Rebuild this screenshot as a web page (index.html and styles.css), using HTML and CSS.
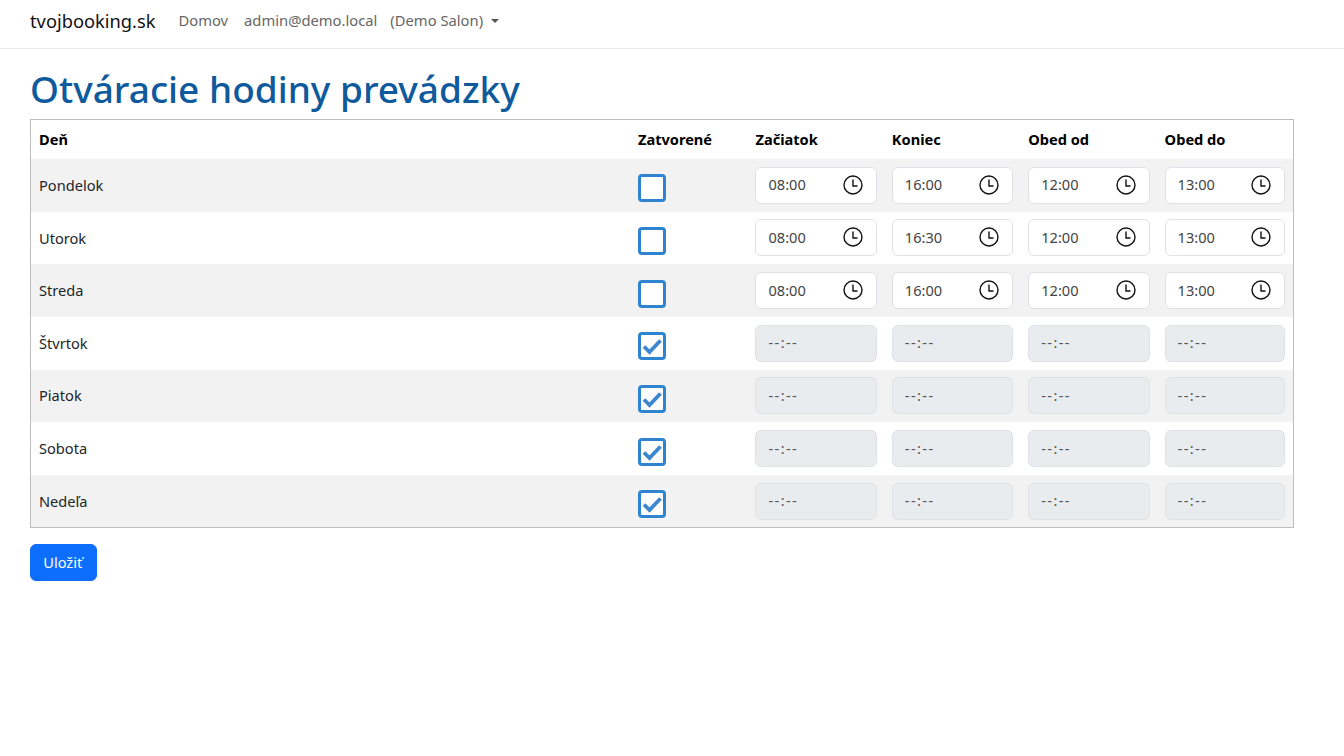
FILE: index.html
```html
<!DOCTYPE html>
<html lang="sk">
<head>
<meta charset="utf-8">
<title>Otváracie hodiny prevádzky</title>
<link rel="stylesheet" href="styles.css">
</head>
<body>
<svg class="defs" width="0" height="0" aria-hidden="true">
  <symbol id="clock" viewBox="0 0 20 20">
    <circle cx="10" cy="10" r="9" fill="none" stroke="#111" stroke-width="1.4"/>
    <path d="M10 4.5V11H14.5" fill="none" stroke="#111" stroke-width="1.4"/>
  </symbol>
  <symbol id="check" viewBox="0 0 24 24">
    <path d="M4 12.5L9.5 18L20.5 6.5" fill="none" stroke="#3d86d0" stroke-width="3.8"/>
  </symbol>
</svg>
<nav class="navbar">
  <a class="brand" href="#">tvojbooking.sk</a>
  <a class="nav-link" href="#">Domov</a>
  <a class="nav-link" href="#">admin@demo.local</a>
  <a class="nav-link dropdown" href="#">(Demo Salon)<span class="caret"></span></a>
</nav>
<main class="content">
  <h1 class="title">Otváracie hodiny prevádzky</h1>
  <table class="hours">
    <colgroup>
      <col class="c-day"><col class="c-closed"><col class="c-start"><col class="c-end"><col class="c-lfrom"><col class="c-lto">
    </colgroup>
    <thead>
      <tr><th>Deň</th><th>Zatvorené</th><th>Začiatok</th><th>Koniec</th><th>Obed od</th><th>Obed do</th></tr>
    </thead>
    <tbody>
      <tr><td>Pondelok</td><td><span class="box"></span></td>
        <td><div class="time">08:00<svg class="ic"><use href="#clock"/></svg></div></td>
        <td><div class="time">16:00<svg class="ic"><use href="#clock"/></svg></div></td>
        <td><div class="time">12:00<svg class="ic"><use href="#clock"/></svg></div></td>
        <td><div class="time">13:00<svg class="ic"><use href="#clock"/></svg></div></td></tr>
      <tr><td>Utorok</td><td><span class="box"></span></td>
        <td><div class="time">08:00<svg class="ic"><use href="#clock"/></svg></div></td>
        <td><div class="time">16:30<svg class="ic"><use href="#clock"/></svg></div></td>
        <td><div class="time">12:00<svg class="ic"><use href="#clock"/></svg></div></td>
        <td><div class="time">13:00<svg class="ic"><use href="#clock"/></svg></div></td></tr>
      <tr><td>Streda</td><td><span class="box"></span></td>
        <td><div class="time">08:00<svg class="ic"><use href="#clock"/></svg></div></td>
        <td><div class="time">16:00<svg class="ic"><use href="#clock"/></svg></div></td>
        <td><div class="time">12:00<svg class="ic"><use href="#clock"/></svg></div></td>
        <td><div class="time">13:00<svg class="ic"><use href="#clock"/></svg></div></td></tr>
      <tr><td>Štvrtok</td><td><span class="box"><svg class="tick"><use href="#check"/></svg></span></td>
        <td><div class="time off">--:--</div></td><td><div class="time off">--:--</div></td><td><div class="time off">--:--</div></td><td><div class="time off">--:--</div></td></tr>
      <tr><td>Piatok</td><td><span class="box"><svg class="tick"><use href="#check"/></svg></span></td>
        <td><div class="time off">--:--</div></td><td><div class="time off">--:--</div></td><td><div class="time off">--:--</div></td><td><div class="time off">--:--</div></td></tr>
      <tr><td>Sobota</td><td><span class="box"><svg class="tick"><use href="#check"/></svg></span></td>
        <td><div class="time off">--:--</div></td><td><div class="time off">--:--</div></td><td><div class="time off">--:--</div></td><td><div class="time off">--:--</div></td></tr>
      <tr><td>Nedeľa</td><td><span class="box"><svg class="tick"><use href="#check"/></svg></span></td>
        <td><div class="time off">--:--</div></td><td><div class="time off">--:--</div></td><td><div class="time off">--:--</div></td><td><div class="time off">--:--</div></td></tr>
    </tbody>
  </table>
  <button class="save" type="button">Uložiť</button>
</main>
</body>
</html>
```
FILE: styles.css
```css
* { box-sizing: border-box; }
html, body { margin: 0; padding: 0; }
body {
  background: #fff;
  color: #212529;
  font-family: "Noto Sans", "Open Sans", sans-serif;
  font-size: 15px;
  line-height: 1.5;
}
.defs { position: absolute; }
a { text-decoration: none; }
.navbar {
  display: flex;
  align-items: center;
  height: 49px;
  padding: 0 30px 7px;
  border-bottom: 1px solid #e6e8ec;
}
.brand { color: #111; font-size: 18.3px; margin-right: 23px; }
.nav-link { color: #666; font-size: 14.75px; margin-right: 16px; }
.dropdown { margin-left: -3px; }
.caret {
  display: inline-block;
  margin-left: 8px;
  vertical-align: 3px;
  border-top: 4.5px solid #555;
  border-left: 4.5px solid transparent;
  border-right: 4.5px solid transparent;
}
.content { padding: 0 30px; }
.title {
  margin: 14px 0 0;
  height: 56px;
  color: #0f5a9c;
  font-size: 37px;
  font-weight: 500;
  line-height: 51px;
}
.hours {
  width: 1264px;
  table-layout: fixed;
  border-collapse: separate;
  border-spacing: 0;
  border: 1px solid #bdbdbd;
}
.c-closed { width: 117.5px; }
.c-start, .c-end, .c-lfrom, .c-lto { width: 136.4px; }
.hours th {
  height: 39px;
  padding: 0 8px;
  text-align: left;
  color: #000;
  font-size: 14.6px;
  font-weight: 700;
}
.hours td {
  height: 52.65px;
  padding: 0 8px;
  color: #212529;
  font-size: 14.6px;
  vertical-align: middle;
}
.hours td:first-child { padding-top: 1px; }
.hours td:nth-child(3), .hours td:nth-child(4), .hours td:nth-child(5) { padding-right: 7px; }
.hours tbody tr:nth-child(odd) td { background: #f2f2f2; }
.box {
  display: flex;
  align-items: center;
  justify-content: center;
  width: 27.5px;
  height: 28px;
  margin: 6px 0 0 0.5px;
  background: #fff;
  border: 3px solid #2e84d0;
  border-radius: 4px;
}
.tick { width: 24px; height: 24px; flex: none; }
.time {
  display: flex;
  align-items: center;
  justify-content: space-between;
  height: 37px;
  padding: 0 14px 0 12px;
  background: #fff;
  border: 1px solid #dee2e6;
  border-radius: 6px;
  color: #444;
  font-size: 14.6px;
}
.time.off { background: #e9ecef; color: #555; letter-spacing: 1.4px; }
.ic { width: 20px; height: 20px; flex: none; margin-top: -1px; margin-right: -1px; }
.save {
  display: block;
  margin-top: 16px;
  width: 66.5px;
  height: 37px;
  padding: 0 1px 2px 0;
  background: #0d6efd;
  border: 1px solid #0d6efd;
  border-radius: 6px;
  color: #fff;
  font-family: inherit;
  font-size: 14.6px;
}
```
